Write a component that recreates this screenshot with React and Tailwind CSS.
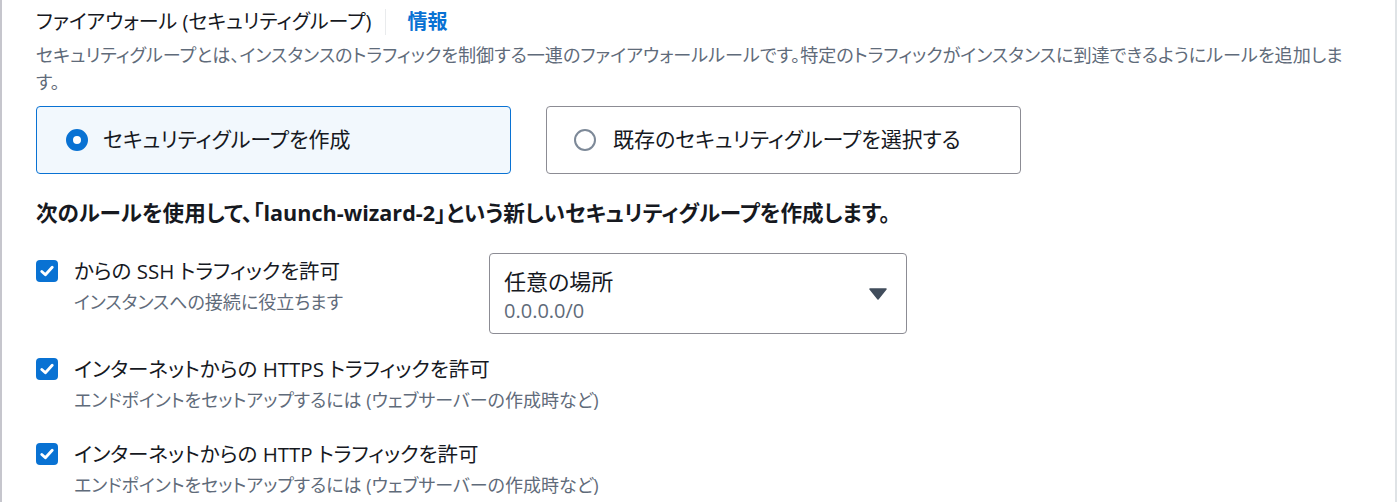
import React from 'react';

const font = "font-['Open_Sans','Noto_Sans_CJK_JP',sans-serif] [font-feature-settings:'palt']";

const Checkbox = () => (
  <span className="w-[22px] h-[22px] shrink-0 rounded-[4px] bg-[#0972d3] flex items-center justify-center">
    <svg width="14" height="12" viewBox="0 0 14 12" fill="none">
      <path d="M1.8 6.4 L5.4 9.8 L12.2 2.2" stroke="#fff" strokeWidth="2.8" strokeLinecap="round" strokeLinejoin="round" />
    </svg>
  </span>
);

const CheckRow = ({ label, sub, className = '' }) => (
  <div className={`flex ${className}`}>
    <div className="pt-[2px]">
      <Checkbox />
    </div>
    <div className="ml-[16px]">
      <div className="text-[20.5px] leading-[26px] text-[#16191f]">{label}</div>
      <div className="mt-[6px] text-[18px] leading-[24px] text-[#5f6b7a]">{sub}</div>
    </div>
  </div>
);

const App = () => {
  return (
    <div className={`w-[1400px] h-[502px] bg-white overflow-hidden ${font}`}>
      <div className="w-[1397px] h-[502px] border-l-2 border-r-2 border-l-[#c6c6cd] border-r-[#dfe3e6] pl-[34px] pt-[9px]">
        {/* heading */}
        <div className="flex items-center h-[26px]">
          <span className="text-[20px] text-[#16191f]">ファイアウォール (セキュリティグループ)</span>
          <span className="ml-[14px] w-px h-[26px] bg-[#e9ebed]" />
          <span className="ml-[21px] text-[20px] font-bold text-[#0972d3]">情報</span>
        </div>
        <p className="mt-[7px] w-[1310px] text-[18.1px] leading-[27px] text-[#5f6b7a]">
          セキュリティグループとは、インスタンスのトラフィックを制御する一連のファイアウォールルールです。特定のトラフィックがインスタンスに到達できるようにルールを追加します。
        </p>

        {/* radio tiles */}
        <div className="mt-[10px] flex gap-[35px]">
          <div className="w-[475px] h-[68px] rounded-[4px] border border-[#0972d3] bg-[#f2f8fd] flex items-center pl-[29px]">
            <span className="w-[22px] h-[22px] rounded-full border-[7px] border-[#0972d3] bg-white shrink-0" />
            <span className="ml-[15px] text-[21px] text-[#16191f]">セキュリティグループを作成</span>
          </div>
          <div className="w-[475px] h-[68px] rounded-[4px] border border-[#8c8c94] bg-white flex items-center pl-[27px]">
            <span className="w-[22px] h-[22px] rounded-full border-2 border-[#7d8998] bg-white shrink-0" />
            <span className="ml-[17px] text-[21px] text-[#16191f]">既存のセキュリティグループを選択する</span>
          </div>
        </div>

        <div className="mt-[25px] text-[21.6px] leading-[28px] font-bold text-[#16191f]">
          次のルールを使用して、「launch-wizard-2」という新しいセキュリティグループを作成します。
        </div>

        {/* rules */}
        <div className="mt-[26px] flex items-start">
          <div className="w-[453px] pt-[5px]">
            <CheckRow label="からの SSH トラフィックを許可" sub="インスタンスへの接続に役立ちます" />
          </div>
          <div className="w-[418px] h-[81px] rounded-[4px] border border-[#8c8c94] flex items-center justify-between pl-[14px] pr-[19px]">
            <div className="pt-[4px]">
              <div className="text-[22px] leading-[28px] text-[#16191f]">任意の場所</div>
              <div className="mt-[3px] text-[20px] leading-[26px] text-[#5f6b7a]">0.0.0.0/0</div>
            </div>
            <svg width="18" height="12" viewBox="0 0 18 12">
              <path d="M1 1 H17 L9 11 Z" fill="#414d5c" stroke="#414d5c" strokeWidth="1.5" strokeLinejoin="round" />
            </svg>
          </div>
        </div>

        <CheckRow
          className="mt-[22px]"
          label="インターネットからの HTTPS トラフィックを許可"
          sub="エンドポイントをセットアップするには (ウェブサーバーの作成時など)"
        />
        <CheckRow
          className="mt-[29px]"
          label="インターネットからの HTTP トラフィックを許可"
          sub="エンドポイントをセットアップするには (ウェブサーバーの作成時など)"
        />
      </div>
    </div>
  );
};

export default App;
